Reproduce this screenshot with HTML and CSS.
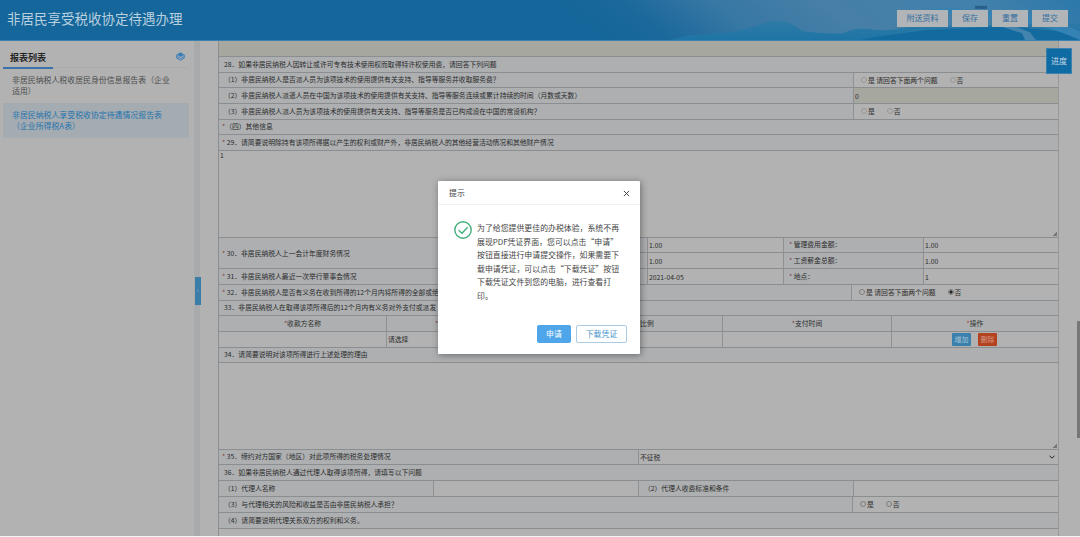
FILE: index.html
```html
<!DOCTYPE html>
<html lang="zh-CN">
<head>
<meta charset="utf-8">
<title>非居民享受税收协定待遇办理</title>
<link rel="stylesheet" href="styles.css">
</head>
<body>
<div class="app">
  <header class="header">
    <svg class="scenery" viewBox="0 0 520 41" preserveAspectRatio="none" aria-hidden="true">
      <defs>
        <linearGradient id="sky" x1="0" x2="1" y1="0.1" y2="0">
          <stop offset="0" stop-color="#15669a"/><stop offset=".12" stop-color="#1b689c"/>
          <stop offset=".3" stop-color="#3878a4"/><stop offset=".5" stop-color="#467fa7"/>
          <stop offset=".8" stop-color="#4281ab"/><stop offset="1" stop-color="#2b78aa"/>
        </linearGradient>
        <linearGradient id="hill" x1="0" x2="0" y1="0" y2="1">
          <stop offset="0" stop-color="#2f7aa6"/><stop offset="1" stop-color="#1d75a5"/>
        </linearGradient>
      </defs>
      <rect width="520" height="41" fill="url(#sky)"/>
      <path d="M130 36Q160 35 178 32Q192 28 203 24Q217 19 231 24L243 32Q265 35 283 34Q296 28 310 30Q330 33 350 27L520 24V41H110Z" fill="url(#hill)"/>
      <path d="M315 38L365 31L445 27L520 34V41H300Z" fill="#126a9f"/>
      <path d="M350 13Q390 5 420 12Q470 9 520 32V41Q480 22 430 18Q390 12 350 13Z" fill="#3483b4"/>
      <path d="M440 27L462 34L465 41H476L470 33L450 25Z" fill="#4384ae"/>
      <path d="M415 6h12v3h-12z" fill="#275f87"/>
    </svg>
    <h1 class="title">非居民享受税收协定待遇办理</h1>
    <div class="actions"><button class="act wide">附送资料</button><button class="act">保存</button><button class="act">重置</button><button class="act">提交</button></div>
  </header>
  <div class="body">
    <aside class="sidebar">
      <div class="side-head"><span class="side-title">报表列表</span>
        <svg class="layers" viewBox="0 0 10 10"><path d="M5 .4L9.4 3 5 5.6.6 3z" fill="#3c7fb8"/><path d="M.8 4.9L5 7.2 9.2 4.9M.8 6.8L5 9.1 9.2 6.8M.8 3v3.8M9.2 3v3.8" fill="none" stroke="#3c7fb8" stroke-width="1.1"/></svg>
      </div>
      <div class="item">非居民纳税人税收居民身份信息报告表（企业<br>适用）</div>
      <div class="item active">非居民纳税人享受税收协定待遇情况报告表<br>（企业所得税A表）</div>
    </aside>
    <div class="splitter"><span class="collapse">‹</span></div>
    <main class="form">
      <div class="row h16 beige"></div>
      <div class="row h16 label pad6">28．如果非居民纳税人因转让或许可专有技术使用权而取得特许权使用费，请回答下列问题</div>
      <div class="row h15"><div class="cell label grow pad6">（1）非居民纳税人是否派人员为该项技术的使用提供有关支持、指导等服务并收取服务费？</div><div class="cell w204 opts dim"><i class="radio"></i><span>是 请回答下面两个问题</span><i class="radio gap"></i><span>否</span></div></div>
      <div class="row h16"><div class="cell label grow pad6">（2）非居民纳税人派遣人员在中国为该项技术的使用提供有关支持、指导等服务连续或累计持续的时间（月数或天数）</div><div class="cell w204 beige val">0</div></div>
      <div class="row h16"><div class="cell label grow pad6">（3）非居民纳税人派人员为该项技术的使用提供有关支持、指导等服务是否已构成设在中国的常设机构？</div><div class="cell w204 opts dim"><i class="radio"></i><span>是</span><i class="radio gap"></i><span>否</span></div></div>
      <div class="row h15 label pad3"><b>*</b>（四）其他信息</div>
      <div class="row h16 label pad3"><b>*</b> 29．请简要说明除持有该项所得据以产生的权利或财产外，非居民纳税人的其他经营活动情况和其他财产情况</div>
      <div class="row h87 area">1<i class="grip"></i></div>
      <div class="group">
        <div class="cell label merged pad3"><b>*</b> 30．非居民纳税人上一会计年度财务情况</div>
        <div class="stack">
          <div class="row h15"><div class="cell label w206"></div><div class="cell w136 val">1.00</div><div class="cell label w140 pad4"><b>*</b> 管理费用金额：</div><div class="cell grow val">1.00</div></div>
          <div class="row h16"><div class="cell label w206"></div><div class="cell w136 val">1.00</div><div class="cell label w140 pad4"><b>*</b> 工资薪金总额：</div><div class="cell grow val">1.00</div></div>
        </div>
      </div>
      <div class="row h16"><div class="cell label w428 pad3"><b>*</b> 31．非居民纳税人最近一次举行董事会情况</div><div class="cell w136 val">2021-04-05</div><div class="cell label w140 pad4"><b>*</b> 地点：</div><div class="cell grow val">1</div></div>
      <div class="row h16"><div class="cell label grow pad3"><b>*</b> 32．非居民纳税人是否有义务在收到所得的12个月内将所得的全部或绝</div><div class="cell w206 opts"><i class="radio"></i><span>是 请回答下面两个问题</span><i class="radio on gap"></i><span>否</span></div></div>
      <div class="row h15 label pad6">33．非居民纳税人在取得该项所得后的12个月内有义务对外支付或派发</div>
      <div class="row h16 label heads"><div class="cell w168"><b>*</b>收款方名称</div><div class="cell w168"><b>*</b>所在国家（地区）名称</div><div class="cell w168"><b>*</b>支付比例</div><div class="cell w169"><b>*</b>支付时间</div><div class="cell grow"><b class="red">*</b>操作</div></div>
      <div class="row h16 heads"><div class="cell w168"></div><div class="cell w168 left">请选择</div><div class="cell w168"></div><div class="cell w169"></div><div class="cell grow tools"><button class="mini blue">增加</button><button class="mini orange">删除</button></div></div>
      <div class="row h15 label pad6">34．请简要说明对该项所得进行上述处理的理由</div>
      <div class="row h87 area"><i class="grip"></i></div>
      <div class="row h15"><div class="cell label w420 pad3"><b>*</b> 35．缔约对方国家（地区）对此项所得的税务处理情况</div><div class="cell grow val select">不征税<svg class="chev" viewBox="0 0 6 4"><path d="M.5.7L3 3.2 5.5.7" fill="none" stroke="#222" stroke-width="1"/></svg></div></div>
      <div class="row h16 label pad6">36．如果非居民纳税人通过代理人取得该项所得，请填写以下问题</div>
      <div class="row h16"><div class="cell label w215 pad6">（1）代理人名称</div><div class="cell w205"></div><div class="cell label w215 pad6">（2）代理人收费标准和条件</div><div class="cell grow"></div></div>
      <div class="row h16"><div class="cell label grow pad6">（3）与代理相关的风险和收益是否由非居民纳税人承担？</div><div class="cell w205 opts"><i class="radio"></i><span>是</span><i class="radio gap"></i><span>否</span></div></div>
      <div class="row h16 label pad6">（4）请简要说明代理关系双方的权利和义务。</div>
      <div class="tail"></div>
    </main>
  </div>
  <button class="progress">进度</button>
  <i class="scroll"></i>
  <section class="modal">
    <div class="modal-head"><span>提示</span><svg class="close" viewBox="0 0 8 8"><path d="M1 1l6 6M7 1L1 7" stroke="#444" stroke-width="1.1"/></svg></div>
    <div class="modal-body">
      <svg class="ok" viewBox="0 0 18 18"><circle cx="9" cy="9" r="8.2" fill="none" stroke="#43b07c" stroke-width="1.4"/><path d="M4.6 9.2L8 12.2l5.6-6" fill="none" stroke="#43b07c" stroke-width="1.4"/></svg>
      <p class="msg">为了给您提供更佳的办税体验，系统不再<br>展现PDF凭证界面，您可以点击“申请”<br>按钮直接进行申请提交操作，如果需要下<br>载申请凭证，可以点击“下载凭证”按钮<br>下载凭证文件到您的电脑，进行查看打<br>印。</p>
    </div>
    <div class="modal-foot"><button class="primary">申请</button><button class="ghost">下载凭证</button></div>
  </section>
</div>
</body>
</html>
```

FILE: styles.css
```css
* { box-sizing: border-box; }
body { margin: 0; background: #fff; font-family: "Noto Sans CJK SC", sans-serif; }
button { font-family: inherit; padding: 0; border: 0; white-space: nowrap; }
.app { position: relative; width: 1080px; height: 537px; overflow: hidden; border-bottom: 1px solid #f4f4f4; background: #b2b2b2; display: flex; flex-direction: column; }
.header { position: relative; flex: none; height: 41px; background: #15669a; border-bottom: 1px solid #3e83b0; display: flex; align-items: center; justify-content: space-between; padding: 0 12px 0 7px; }
.scenery { position: absolute; right: 0; top: 0; width: 520px; height: 40px; }
.title { position: relative; margin: 0; padding-bottom: 5px; font-size: 13.5px; line-height: 18px; font-weight: 400; color: #b9d0df; }
.actions { position: relative; display: flex; gap: 4px; padding-bottom: 4px; }
.act { width: 36px; height: 17px; padding-bottom: 2px; background: #b1b5b8; color: #336d9e; font-size: 8px; line-height: 15px; }
.act.wide { width: 51px; }
.body { flex: 1; min-height: 0; display: flex; }
.sidebar { width: 195px; flex: none; padding: 0 5px 0 3px; border-right: 1px solid #a9abac; }
.side-head { height: 27px; border-bottom: 1px solid #a9acae; margin-bottom: 6px; display: flex; justify-content: space-between; align-items: flex-end; padding-right: 4px; }
.side-title { width: 50px; height: 28px; margin-bottom: -2px; padding: 8px 0 0 7px; border-bottom: 2px solid #3b72ac; font-size: 9px; line-height: 18px; font-weight: 700; color: #232323; white-space: nowrap; }
.layers { width: 9px; height: 9px; margin-bottom: 6px; }
.item { height: 29px; padding: 0 0 0 9px; font-size: 7.9px; line-height: 11px; color: #4c4c4c; white-space: nowrap; }
.item.active { height: 35px; padding-top: 6px; background: #a4acb2; color: #2673ac; }
.splitter { width: 5px; flex: none; background: #a7a9ab; display: flex; flex-direction: column; }
.collapse { margin-top: 236px; height: 28px; width: 6px; background: #3a7da8; color: #84abc6; font-size: 8px; line-height: 25px; text-align: center; }
.form { width: 841px; margin-left: 18px; border-left: 1px solid #8c8f92; border-right: 1px solid #969899; font-size: 6.8px; color: #2b2b2b; white-space: nowrap; display: flex; flex-direction: column; }
.row { flex: none; display: flex; align-items: center; border-bottom: 1px solid #8b8e91; overflow: hidden; }
.row.label, .cell.label { background: #adafb1; }
.h15 { height: 15px; }
.h16 { height: 16px; }
.h87 { height: 87px; }
.beige { background: #a6a79f; }
.pad3 { padding-left: 3px; }
.pad4, .pad6 { padding-left: 5px; }
.cell { align-self: stretch; flex: none; display: flex; align-items: center; overflow: hidden; border-right: 1px solid #8e9194; white-space: pre; }
.row.label.pad3, .row.label.pad6, .cell { padding-bottom: 2px; }
.cell:last-child { border-right: 0; }
.cell.grow { flex: 1; min-width: 0; }
.row.label, .merged { white-space: pre; }
b { font-weight: 400; color: #7d3535; }
b.red { color: #aa3020; }
.area { position: relative; align-items: flex-start; padding-left: 1px; line-height: 9px; }
.grip { position: absolute; right: 1px; bottom: 1px; width: 4px; height: 4px; background: linear-gradient(135deg, transparent 50%, #777 50%); }
.w204 { width: 204px; }
.w205 { width: 205px; }
.w206 { width: 206px; }
.w136 { width: 136px; }
.w140 { width: 140px; }
.w428 { width: 429px; }
.w420 { width: 420px; }
.w215 { width: 215px; }
.w168 { width: 168px; }
.w169 { width: 169px; }
.val { padding-left: 1px; padding-bottom: 0; }
.opts { padding-left: 7px; padding-bottom: 1px; }
.radio { width: 6px; height: 6px; margin-right: 1px; border: 1px solid #7d7d7d; border-radius: 50%; background: #b2b2b2; }
.dim .radio { border-color: #989898; }
.radio.gap { margin-left: 12px; }
.radio.on { background: radial-gradient(circle, #222 0 1.4px, #b2b2b2 1.8px); }
.group { display: flex; flex: none; height: 31px; }
.merged { width: 223px; border-right: 0; border-bottom: 1px solid #8b8e91; padding-bottom: 1px; }
.stack { flex: 1; min-width: 0; }
.heads .cell { justify-content: center; }
.heads .cell.left { justify-content: flex-start; padding-left: 1px; }
.heads .cell.tools { padding-bottom: 0; }
.mini { width: 19px; height: 13px; margin: 0 4px 0 3px; color: #a9c2d2; font-size: 7px; line-height: 13px; border-radius: 1px; }
.blue { background: #3a80ae; }
.orange { background: #b3421f; color: #d49b88; }
.select { justify-content: space-between; padding-right: 3px; }
.chev { width: 6px; height: 4px; }
.tail { flex: 1; }
.progress { position: absolute; left: 1046px; top: 48px; width: 26px; height: 26px; padding-bottom: 1px; background: #0f6ba4; border: 1px solid #3b83ae; color: #c2d7e4; font-size: 8px; }
.scroll { position: absolute; left: 1077px; top: 321px; width: 3px; height: 117px; background: #777; }
.modal { position: absolute; left: 438px; top: 181px; width: 202px; height: 173px; background: #fff; border-radius: 1px; box-shadow: 1px 1px 7px rgba(0,0,0,.4); display: flex; flex-direction: column; }
.modal-head { height: 24px; border-bottom: 1px solid #f1f1f1; display: flex; align-items: center; justify-content: space-between; padding: 0 10px 0 11px; font-size: 7.9px; color: #444; }
.close { width: 7px; height: 7px; margin-top: 2px; }
.modal-body { flex: 1; display: flex; padding: 16px 0 0 16px; gap: 5px; }
.ok { width: 18px; height: 18px; flex: none; }
.msg { margin: 0; font-size: 7.9px; line-height: 13.6px; color: #444; white-space: nowrap; }
.modal-foot { display: flex; justify-content: flex-end; gap: 5px; padding: 0 13px 11px 0; }
.primary { width: 34px; height: 18px; padding-bottom: 1px; background: #4ea5e9; border-radius: 2px; color: #fff; font-size: 7.9px; }
.ghost { width: 51px; height: 18px; padding-bottom: 1px; background: #fff; border: 1px solid #a9cbe4; border-radius: 2px; color: #4393cb; font-size: 7.9px; }
```
